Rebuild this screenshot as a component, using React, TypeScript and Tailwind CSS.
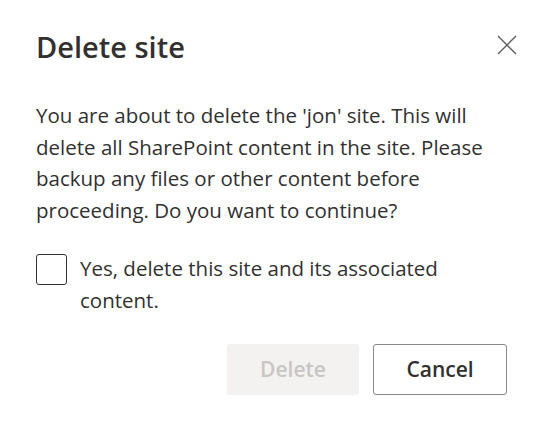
import React, { useState } from 'react';

const App: React.FC = () => {
  const [checked, setChecked] = useState(false);

  return (
    <div
      className="w-[535px] h-[424px] bg-white text-[#323130] overflow-hidden"
      style={{ fontFamily: '"Open Sans", "Noto Sans", sans-serif' }}
    >
      <div className="flex flex-col pl-[36px] pr-[16px] pt-[27px]">
        {/* Header */}
        <div className="flex items-start justify-between">
          <h1 className="text-[29px] leading-[40px] font-semibold text-[#323130]">Delete site</h1>
          <button className="mt-[6px] w-[24px] h-[24px] flex items-center justify-center text-[#605e5c]">
            <svg width="20" height="20" viewBox="0 0 20 20" fill="none">
              <path d="M1 1L19 19M19 1L1 19" stroke="currentColor" strokeWidth="1.4" />
            </svg>
          </button>
        </div>

        {/* Body */}
        <p className="mt-[33px] w-[470px] text-[20.5px] leading-[31.7px] text-[#323130]">
          You are about to delete the 'jon' site. This will delete all SharePoint content in the
          site. Please backup any files or other content before proceeding. Do you want to
          continue?
        </p>

        {/* Checkbox */}
        <label className="mt-[26px] flex items-start gap-[13px] cursor-pointer">
          <input
            type="checkbox"
            className="sr-only"
            checked={checked}
            onChange={(e) => setChecked(e.target.checked)}
          />
          <span className="mt-[1px] w-[31px] h-[31px] shrink-0 rounded-[3px] border-[1.5px] border-[#323130] bg-white" />
          <span className="w-[400px] text-[20.5px] leading-[31.7px] text-[#323130]">
            Yes, delete this site and its associated content.
          </span>
        </label>

        {/* Footer */}
        <div className="mt-[28px] flex justify-end gap-[14px] pr-[12px]">
          <button
            disabled={!checked}
            className="w-[132px] h-[51px] rounded-[3px] bg-[#f3f2f1] text-[#c8c6c4] text-[21px] font-semibold disabled:cursor-default"
          >
            Delete
          </button>
          <button className="w-[134px] h-[51px] rounded-[3px] border border-[#8a8886] bg-white text-[#323130] text-[21px] font-semibold">
            Cancel
          </button>
        </div>
      </div>
    </div>
  );
};

export default App;
